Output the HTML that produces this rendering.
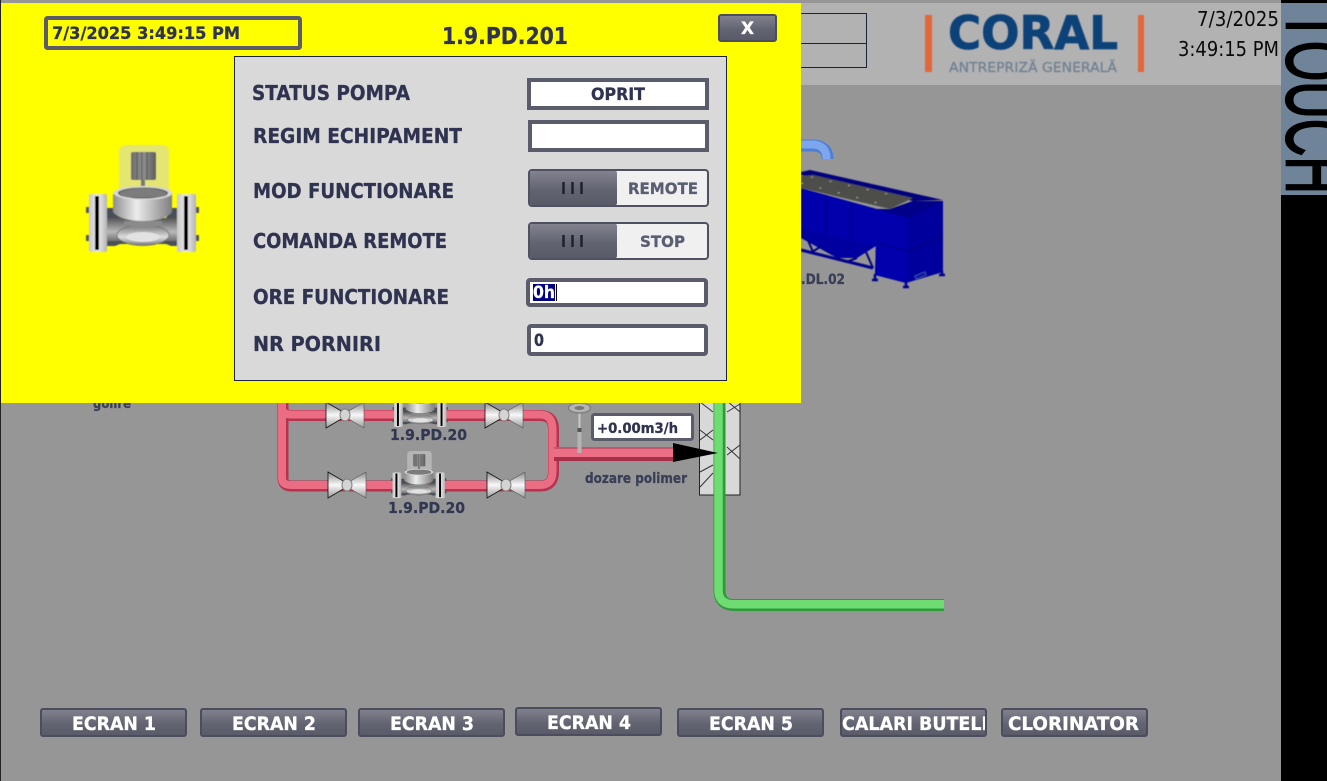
<!DOCTYPE html>
<html><head><meta charset="utf-8"><title>HMI</title>
<style>
html,body{margin:0;padding:0;background:#969696;overflow:hidden}
svg{display:block}
text{font-family:"DejaVu Sans","Liberation Sans",sans-serif;font-weight:700;fill:currentColor;stroke:currentColor;stroke-width:.3;color:#2f3350}
.w{color:#fff}
.r{font-family:"DejaVu Sans","Liberation Sans",sans-serif;font-weight:400;color:#0a0a0a;stroke-width:0}
</style></head><body>
<svg xmlns="http://www.w3.org/2000/svg" width="1327" height="781" viewBox="0 0 1327 781">
<defs>
<linearGradient id="btn" x1="0" y1="0" x2="0" y2="1"><stop offset="0" stop-color="#83838f"/><stop offset=".55" stop-color="#636472"/><stop offset="1" stop-color="#595a68"/></linearGradient>
<linearGradient id="fl" x1="0" y1="0" x2="1" y2="0"><stop offset="0" stop-color="#c8c8c8"/><stop offset=".5" stop-color="#ececec"/><stop offset="1" stop-color="#b4b4b4"/></linearGradient>
<linearGradient id="bowl" x1="0" y1="0" x2="1" y2="0"><stop offset="0" stop-color="#8e8e8e"/><stop offset=".4" stop-color="#ececec"/><stop offset="1" stop-color="#7e7e7e"/></linearGradient>
<linearGradient id="bd" x1="0" y1="0" x2="0" y2="1"><stop offset="0" stop-color="#555"/><stop offset=".6" stop-color="#b8b8b8"/><stop offset="1" stop-color="#707070"/></linearGradient>
<linearGradient id="blg" x1="0" y1="0" x2="0" y2="1"><stop offset="0" stop-color="#6e6e6e"/><stop offset=".6" stop-color="#dedede"/><stop offset="1" stop-color="#777"/></linearGradient>
<linearGradient id="mot" x1="0" y1="0" x2="1" y2="0"><stop offset="0" stop-color="#6e6e6e"/><stop offset=".5" stop-color="#8e8e8e"/><stop offset="1" stop-color="#5e5e5e"/></linearGradient>
<linearGradient id="vl" x1="0" y1="0" x2="0" y2="1"><stop offset="0" stop-color="#8a8a8a"/><stop offset=".5" stop-color="#f8f8f8"/><stop offset="1" stop-color="#9a9a9a"/></linearGradient>
<filter id="soft2" x="-5%" y="-5%" width="110%" height="110%"><feGaussianBlur stdDeviation=".6"/></filter>
<filter id="soft3" x="-5%" y="-5%" width="110%" height="110%"><feGaussianBlur stdDeviation=".4"/></filter>
<clipPath id="c6"><rect x="842" y="710" width="143" height="25"/></clipPath>
<g id="pump">
<rect x="119" y="145" width="50" height="52" rx="7" fill="#cfcfcf" fill-opacity=".55"/>
<rect x="131" y="152" width="25" height="28" rx="2" fill="url(#mot)"/>
<path d="M137 152v28M142 152v28M147 152v28" stroke="#555" stroke-width="1"/>
<rect x="141" y="180" width="4" height="10" fill="#777"/>
<path d="M106 208h10l6 10h44l6-10h7v38h-8l-5-2h-46l-5 2h-9z" fill="#4a5058"/>
<rect x="107" y="218" width="70" height="23" fill="url(#bd)"/>
<path d="M113 194 L113 212 Q121 221 143 221 Q165 221 172 212 L172 194Z" fill="url(#bowl)"/>
<ellipse cx="143" cy="193" rx="29.500" ry="7" fill="#d8d8d8"/>
<ellipse cx="143" cy="193" rx="25" ry="5.500" fill="#5c5c5c"/>
<path d="M120 192 Q143 184 166 192 L166 196 Q143 199 120 196Z" fill="#7c7c7c"/>
<ellipse cx="143" cy="235" rx="26" ry="10.500" fill="url(#blg)" stroke="#6a6a6a" stroke-width=".8"/>
<ellipse cx="143" cy="237" rx="17" ry="5" fill="#e2e2e2"/>
<path d="M124 221h38v4q-19 5-38 0z" fill="#8a8a8a"/>
<rect x="89" y="194" width="18" height="58" rx="2" fill="url(#fl)"/>
<rect x="95" y="196" width="4" height="54" fill="#000"/>
<rect x="177" y="194" width="19" height="58" rx="2" fill="url(#fl)"/>
<rect x="184" y="196" width="4" height="54" fill="#000"/>
<path d="M86 207h3v6h-3zM86 235h3v6h-3zM196 207h3v6h-3zM196 235h3v6h-3z" fill="#555"/>
</g>
<g id="valve">
<path d="M0 0 L17 10 V16 L0 26Z" fill="url(#vl)" stroke="#111" stroke-width=".8"/>
<path d="M38 0 L21 10 V16 L38 26Z" fill="url(#vl)" stroke="#555" stroke-width=".6"/>
<ellipse cx="19" cy="13" rx="5" ry="6" fill="#d4d4d4" stroke="#808080"/>
</g>
</defs>

<rect width="1327" height="781" fill="#969696"/>
<rect x="0" y="0" width="1" height="781" fill="#222"/>

<!-- header -->
<rect x="801" y="3" width="480" height="82" fill="#b2b2b2"/>
<rect x="789.500" y="13.500" width="77" height="54" fill="none" stroke="#1c2340" stroke-width="1"/>
<path d="M790 43.500H867" stroke="#1c2340" stroke-width="1"/>
<g filter="url(#soft2)">
<rect x="925" y="15" width="7" height="57" fill="#e0683a"/>
<rect x="1138" y="15" width="6" height="57" fill="#e0683a"/>
<text x="948" y="49" font-size="46" textLength="170" lengthAdjust="spacingAndGlyphs" style="color:#0d4379;stroke-width:.8">CORAL</text>
<text x="949" y="72" font-size="13.500" textLength="168" lengthAdjust="spacingAndGlyphs" style="color:#6d7f92;font-weight:400;stroke-width:.2">ANTREPRIZĂ GENERALĂ</text>
</g>
<text class="r" x="1197" y="26" font-size="20" textLength="82" lengthAdjust="spacingAndGlyphs">7/3/2025</text>
<text class="r" x="1178" y="56" font-size="20" textLength="101" lengthAdjust="spacingAndGlyphs">3:49:15 PM</text>

<!-- right side -->
<rect x="1281" y="0" width="46" height="781" fill="#000"/>
<rect x="1281" y="3" width="46" height="192" fill="#6f8499"/>
<text transform="translate(1287,10) rotate(90) scale(1,1.6)" font-size="52" style="font-family:'Liberation Sans',sans-serif;font-weight:400;color:#000;stroke-width:1.400">TOUCH</text>

<!-- blue tube -->
<path d="M795 145.500H812Q827.500 145.500 827.500 159" fill="none" stroke="#4f7fd4" stroke-width="12"/>
<path d="M795 144.500H812Q826.500 144.500 826.500 159" fill="none" stroke="#7ea6ee" stroke-width="8"/>

<!-- tank -->
<g filter="url(#soft3)">
<path d="M801 250 L873 268" stroke="#000090" stroke-width="3" fill="none"/>
<path d="M801 238 L837 258 L857 258 L876 246 L876 240 L801 222Z" fill="#0000a0"/>
<path d="M807 238 L813 252M820 247 L812 252M866 252 L873 268M857 258 L846 262M837 258 L846 262" stroke="#00007e" stroke-width="2" fill="none"/>
<path d="M801 188 L877 209 L877 246 L801 228Z" fill="#0000ac"/>
<path d="M826 195V234M851 202V240" stroke="#00007c" stroke-width="1"/>
<path d="M877 209 L890 209 L913 201 L943 201 L943 272 L906 283 L875 275Z" fill="#00009c"/>
<path d="M877 209 L908 218 L907 283 L875 275Z" fill="#0000ac"/>
<path d="M877 209 L890 209 L913 201 L943 201 L908 218Z" fill="#000088"/>
<path d="M877 243 L908 251 L943 236" fill="none" stroke="#00007c" stroke-width="1"/>
<path d="M801 172 L810 170 L943 200 L913 201 L801 175Z" fill="#00007e"/>
<path d="M801 176 L813 175 L913 198 L890 209 L801 188Z" fill="#4e4e48"/>
<path d="M811 177l90 20M801 183l88 23" stroke="#a8a8a8" stroke-width="1" stroke-dasharray="2 17"/>
<path d="M875 274v6M906 282v6M942 271v5" stroke="#000090" stroke-width="2.500"/>
<path d="M872 280h6M903 287h6M939 275h6" stroke="#000090" stroke-width="2.500"/>
<path d="M915 276l10-4 1 3-10 4z" fill="none" stroke="#3a4ab0" stroke-width="1"/>
</g>
<text x="801" y="284" font-size="14" textLength="44" lengthAdjust="spacingAndGlyphs" style="color:#3a3f58">.DL.02</text>

<!-- golire label -->
<text x="93" y="408" font-size="13" textLength="38" lengthAdjust="spacingAndGlyphs" style="color:#3a3f58">golire</text>

<!-- hatched box -->
<rect x="699.500" y="395" width="40.500" height="100" fill="#d8d8d8" stroke="#222" stroke-width="1"/>
<path d="M700 430L713 440M713 430L700 440M700 487L713 473M700 472L713 465M727 401L740 412M727 412L740 404M727 455L740 445M727 447L740 459M700 402L713 412" stroke="#333" stroke-width="1"/>

<!-- green pipe -->
<path d="M719.500 395V590Q719.500 605 734 605H944" fill="none" stroke="#2f9a3c" stroke-width="12"/>
<path d="M718.500 395V590Q718.500 604.300 734 604.300H944" fill="none" stroke="#6fdc72" stroke-width="8.500"/>

<!-- red pipes -->
<path d="M283 395V408Q283 415.500 291 415.500H540Q553.500 415.500 553.500 429V472Q553.500 486 540 486H291Q283 486 283 478V408" fill="none" stroke="#b5334f" stroke-width="11"/>
<path d="M282 395V408Q282 414.500 291 414.500H540Q552.500 414.500 552.500 429V472Q552.500 485 540 485H291Q282 485 282 478V408" fill="none" stroke="#ea6d84" stroke-width="8"/>
<rect x="554" y="447" width="120" height="14" fill="#a82f48"/>
<rect x="554" y="447" width="120" height="2" fill="#c4566c"/>
<rect x="554" y="449" width="120" height="8" fill="#ec6f86"/>
<path d="M673 443 L718 453 L673 462Z" fill="#000"/>

<!-- sensor -->
<path d="M579.500 410V430" stroke="#c8c8c8" stroke-width="2"/>
<path d="M579.500 430V453" stroke="#b4b4b4" stroke-width="4"/>
<path d="M579.500 428V432" stroke="#555" stroke-width="4"/>
<ellipse cx="579.500" cy="408" rx="11" ry="5" fill="#b4b4b4" stroke="#808080" stroke-width="1.500"/>
<ellipse cx="579.500" cy="408" rx="5" ry="2" fill="#777"/>
<rect x="592.500" y="414.500" width="100" height="25" rx="2" fill="#fff" stroke="#5b5c6b" stroke-width="3"/>
<text x="597" y="433" font-size="14" textLength="81" lengthAdjust="spacingAndGlyphs">+0.00m3/h</text>
<text x="585" y="483" font-size="14" textLength="102" lengthAdjust="spacingAndGlyphs" style="color:#3a3f58">dozare polimer</text>

<!-- valves -->
<use href="#valve" transform="translate(326,402)"/>
<use href="#valve" transform="translate(485,402)"/>
<use href="#valve" transform="translate(328,472)"/>
<use href="#valve" transform="translate(487,472)"/>
<!-- small pumps -->
<use href="#pump" transform="translate(350.400,316) scale(.49,.44)"/>
<use href="#pump" transform="translate(348.900,387.200) scale(.49,.44)"/>
<text x="390" y="440" font-size="15" textLength="77" lengthAdjust="spacingAndGlyphs" style="color:#333852">1.9.PD.20</text>
<text x="388" y="513" font-size="15" textLength="77" lengthAdjust="spacingAndGlyphs" style="color:#333852">1.9.PD.20</text>

<!-- bottom buttons -->
<g stroke="#4b4d5e" stroke-width="2" fill="url(#btn)">
<rect x="41" y="709" width="145" height="27" rx="2"/>
<rect x="201" y="709" width="145" height="27" rx="2"/>
<rect x="359" y="709" width="145" height="27" rx="2"/>
<rect x="516" y="708" width="145" height="27" rx="2"/>
<rect x="678" y="709" width="145" height="27" rx="2"/>
<rect x="841" y="709" width="145" height="27" rx="2"/>
<rect x="1002" y="709" width="145" height="27" rx="2"/>
</g>
<g font-size="18.500">
<text class="w" x="72" y="730" textLength="84" lengthAdjust="spacingAndGlyphs">ECRAN 1</text>
<text class="w" x="232" y="730" textLength="84" lengthAdjust="spacingAndGlyphs">ECRAN 2</text>
<text class="w" x="390" y="730" textLength="84" lengthAdjust="spacingAndGlyphs">ECRAN 3</text>
<text class="w" x="547" y="729" textLength="84" lengthAdjust="spacingAndGlyphs">ECRAN 4</text>
<text class="w" x="709" y="730" textLength="84" lengthAdjust="spacingAndGlyphs">ECRAN 5</text>
<g clip-path="url(#c6)"><text class="w" x="842" y="730" textLength="146" lengthAdjust="spacingAndGlyphs">CALARI BUTELI</text></g>
<text class="w" x="1008" y="730" textLength="131" lengthAdjust="spacingAndGlyphs">CLORINATOR</text>
</g>

<!-- popup -->
<rect x="1" y="3" width="800" height="400" fill="#ffff00"/>
<rect x="46" y="18" width="254" height="30" rx="1.500" fill="none" stroke="#5b5c68" stroke-width="4"/>
<text x="52" y="39" font-size="17" textLength="188" lengthAdjust="spacingAndGlyphs">7/3/2025 3:49:15 PM</text>
<text x="442" y="44" font-size="23" textLength="126" lengthAdjust="spacingAndGlyphs">1.9.PD.201</text>
<rect x="719" y="15" width="57" height="26" rx="2" fill="url(#btn)" stroke="#4b4d5e" stroke-width="2"/>
<text class="w" x="741" y="34" font-size="17" textLength="13" lengthAdjust="spacingAndGlyphs">X</text>

<use href="#pump" filter="url(#soft3)"/>

<rect x="234.500" y="56.500" width="492" height="324" fill="#d9d9d9" stroke="#1c2340" stroke-width="1"/>
<g font-size="20">
<text x="252" y="100" textLength="158" lengthAdjust="spacingAndGlyphs">STATUS POMPA</text>
<text x="253" y="143" textLength="209" lengthAdjust="spacingAndGlyphs">REGIM ECHIPAMENT</text>
<text x="253" y="198" textLength="201" lengthAdjust="spacingAndGlyphs">MOD FUNCTIONARE</text>
<text x="253" y="248" textLength="194" lengthAdjust="spacingAndGlyphs">COMANDA REMOTE</text>
<text x="253" y="304" textLength="196" lengthAdjust="spacingAndGlyphs">ORE FUNCTIONARE</text>
<text x="253" y="351" textLength="128" lengthAdjust="spacingAndGlyphs">NR PORNIRI</text>
</g>

<rect x="529" y="80" width="178" height="28" fill="#fff" stroke="#5b5c6b" stroke-width="4"/>
<text x="591" y="100" font-size="16.500" textLength="54" lengthAdjust="spacingAndGlyphs">OPRIT</text>
<rect x="530" y="122" width="177" height="28" fill="#fff" stroke="#5b5c6b" stroke-width="4"/>

<!-- toggles -->
<rect x="529" y="170" width="179" height="36" rx="3" fill="#f0f0f0" stroke="#4f5163" stroke-width="2"/>
<rect x="530" y="171" width="87" height="34" rx="2" fill="url(#btn)"/>
<path d="M563.500 182v12M572.500 182v12M581.500 182v12" stroke="#1f2130" stroke-width="2.500"/>
<text x="628" y="194" font-size="16" textLength="70" lengthAdjust="spacingAndGlyphs" style="color:#5a5e72">REMOTE</text>
<rect x="529" y="223" width="179" height="36" rx="3" fill="#f0f0f0" stroke="#4f5163" stroke-width="2"/>
<rect x="530" y="224" width="87" height="34" rx="2" fill="url(#btn)"/>
<path d="M563.500 235v12M572.500 235v12M581.500 235v12" stroke="#1f2130" stroke-width="2.500"/>
<text x="640" y="247" font-size="16" textLength="45" lengthAdjust="spacingAndGlyphs" style="color:#5a5e72">STOP</text>

<!-- inputs -->
<rect x="528" y="280" width="178" height="25" rx="2" fill="#fff" stroke="#5b5c6b" stroke-width="4"/>
<rect x="533" y="284" width="22" height="17" fill="#000080"/>
<path d="M556.500 284v17" stroke="#000" stroke-width="1"/>
<text class="w" x="533" y="298" font-size="17" textLength="22" lengthAdjust="spacingAndGlyphs">0h</text>
<rect x="529" y="326" width="177" height="28" rx="2" fill="#fff" stroke="#5b5c6b" stroke-width="4"/>
<text x="534" y="346" font-size="17" textLength="10" lengthAdjust="spacingAndGlyphs">0</text>
</svg>
</body></html>
